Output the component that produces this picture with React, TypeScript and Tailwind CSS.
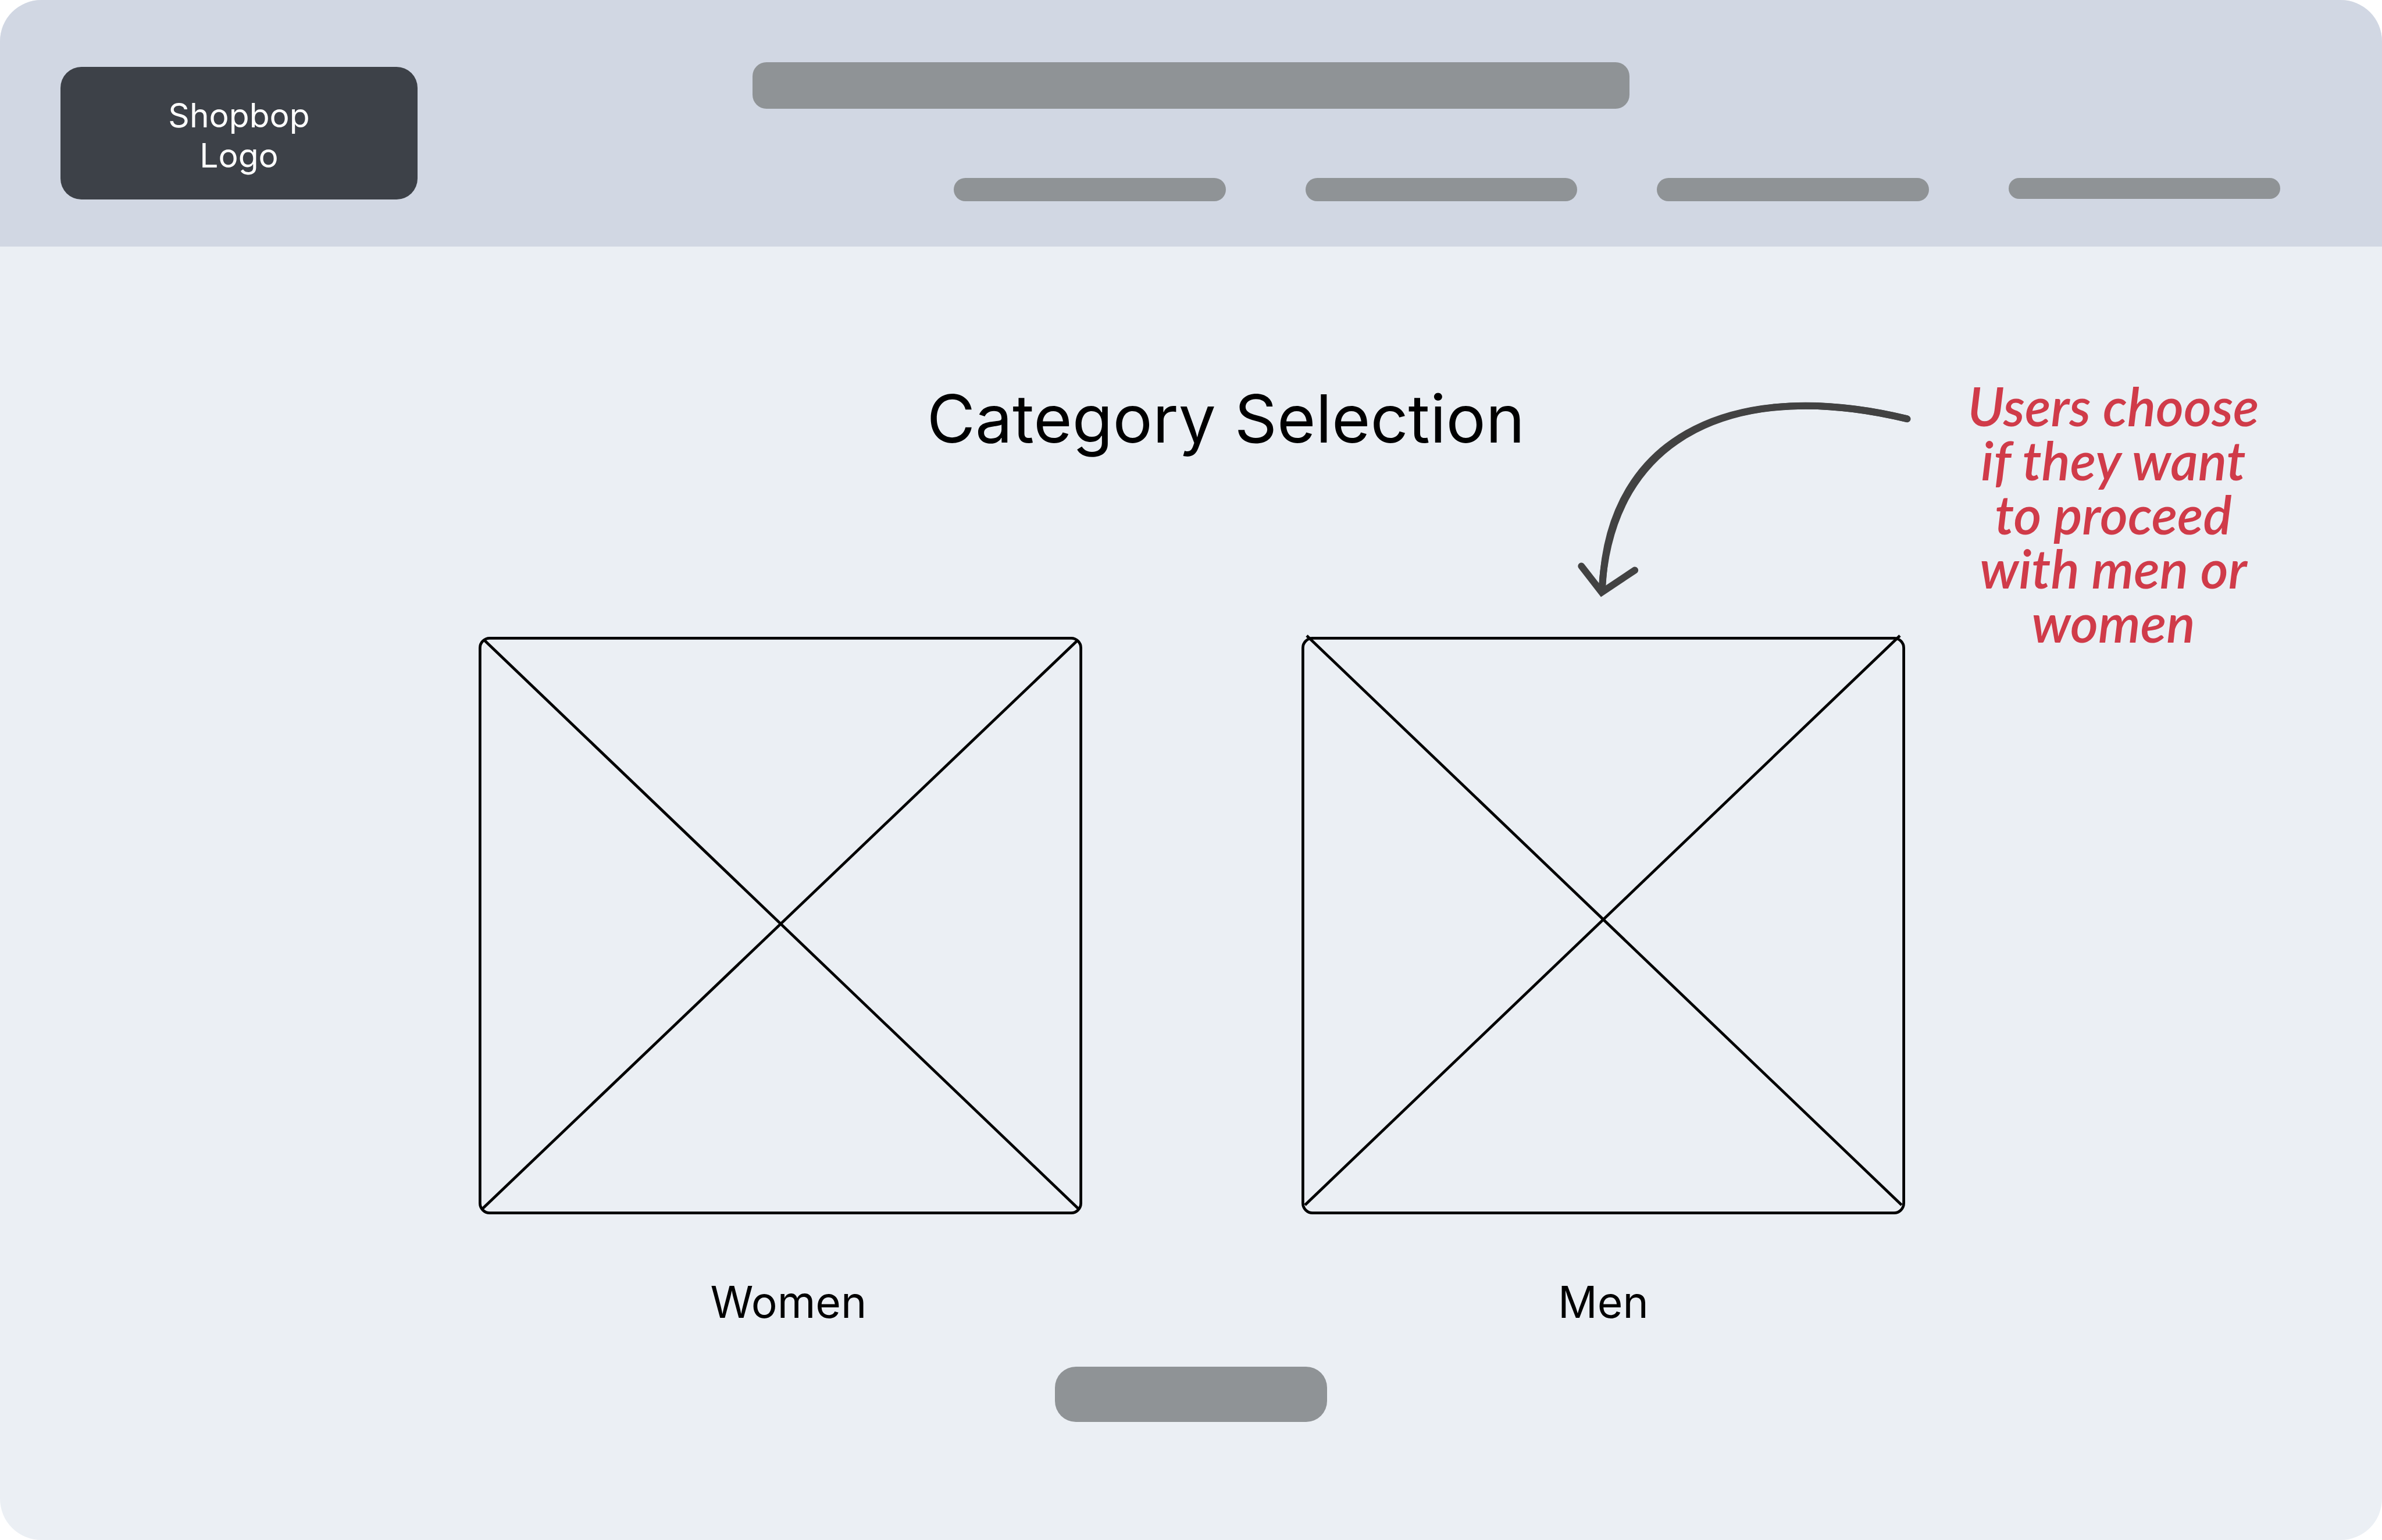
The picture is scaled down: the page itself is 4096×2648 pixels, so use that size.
type Line = [number, number, number, number];

type Category = {
  name: string;
  lines: Line[];
  labelClass: string;
};

const categories: Category[] = [
  {
    name: "Women",
    lines: [
      [10, 6, 1032, 984],
      [1030, 6, 6, 984],
    ],
    labelClass: "pl-7",
  },
  {
    name: "Men",
    lines: [
      [9, -2, 1032, 977],
      [1029, -2, 6, 977],
    ],
    labelClass: "",
  },
];

const navItems = [
  { label: "Navigation item 1", height: "h-10" },
  { label: "Navigation item 2", height: "h-10" },
  { label: "Navigation item 3", height: "h-10" },
  { label: "Navigation item 4", height: "h-9" },
];

function Header() {
  return (
    <header className="flex items-start bg-[#d1d7e3] pt-[107px] pr-[175px] pb-[78px] pl-[104px]">
      <a
        href="#home"
        className="mt-2 flex h-[228px] w-[614px] shrink-0 items-center justify-center rounded-[36px] bg-[#3d4148] pt-2 text-center text-[57px] leading-[69px] text-white"
      >
        Shopbop
        <br />
        Logo
      </a>
      <div className="flex grow flex-col gap-[119px]">
        <input
          type="search"
          aria-label="Search"
          className="mr-[1119px] ml-[576px] h-20 rounded-3xl bg-[#8f9396] px-8 text-[40px] outline-none"
        />
        <nav className="ml-[922px] grid grid-cols-4 items-start gap-[137px]">
          {navItems.map((item) => (
            <a
              key={item.label}
              href="#category"
              aria-label={item.label}
              className={`${item.height} rounded-[20px] bg-[#8f9396]`}
            />
          ))}
        </nav>
      </div>
    </header>
  );
}

function ImagePlaceholder({ lines }: { lines: Line[] }) {
  return (
    <svg
      viewBox="0 0 1038 993"
      className="block w-full overflow-visible"
      fill="none"
      stroke="#000000"
      strokeWidth="4.74"
      aria-hidden="true"
    >
      <rect x="2.4" y="2.4" width="1033.2" height="988.2" rx="16.6" />
      {lines.map(([x1, y1, x2, y2]) => (
        <line key={`${x1}-${x2}`} x1={x1} y1={y1} x2={x2} y2={y2} />
      ))}
    </svg>
  );
}

function Annotation() {
  return (
    <aside className="absolute top-[227px] right-[175px] flex items-start">
      <svg
        viewBox="0 0 990 580"
        className="mt-9 mr-[52px] h-[344px] w-[587px]"
        fill="none"
        stroke="#424242"
        strokeWidth="20"
        strokeLinecap="round"
        aria-hidden="true"
      >
        <path d="M964 56C480 -61 102 90 78 559" strokeLinecap="butt" />
        <path d="M964 56C480 -61 102 90 80 540" />
        <path d="M19 483L78 559L174 495" strokeLinejoin="miter" />
      </svg>
      <p className="w-[574px] text-center font-['Lato',cursive] text-[92px] leading-[93px] font-semibold text-[#d03b49] italic">
        Users choose
        <br />
        if they want
        <br />
        to proceed
        <br />
        with men or
        <br />
        women
      </p>
    </aside>
  );
}

export default function App() {
  return (
    <div className="min-h-screen overflow-hidden rounded-[71px] bg-[#ebeff4] font-['Inter',sans-serif] text-black">
      <Header />
      <main className="relative flex flex-col pt-[227px]">
        <h1 className="pl-[120px] text-center text-[114px] leading-[138px]">Category Selection</h1>
        <Annotation />
        <div className="mt-[306px] grid grid-cols-2 gap-[377px] pr-[820px] pl-[823px]">
          {categories.map((category) => (
            <button key={category.name} type="button" className="flex flex-col gap-[105px]">
              <ImagePlaceholder lines={category.lines} />
              <span className={`w-full text-center text-[75px] leading-[92px] ${category.labelClass}`}>
                {category.name}
              </span>
            </button>
          ))}
        </div>
        <button
          type="button"
          aria-label="Continue"
          className="mx-auto mt-[65px] h-[95px] w-[468px] rounded-[36px] bg-[#8f9396]"
        />
      </main>
    </div>
  );
}
